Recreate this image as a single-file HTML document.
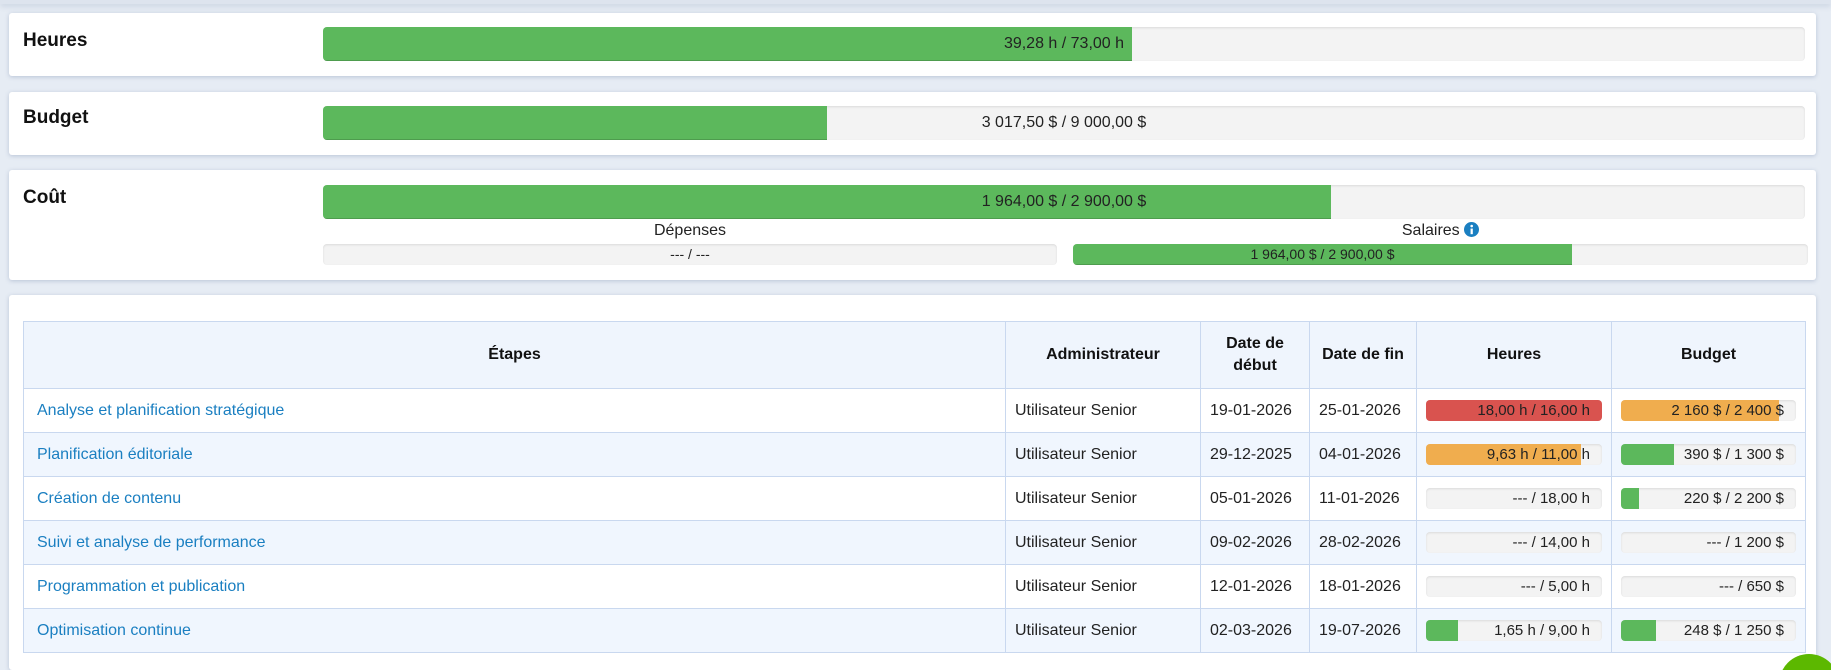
<!DOCTYPE html>
<html style="width:1831px;height:670px;overflow:hidden"><head><meta charset="utf-8"><style>
*{box-sizing:border-box;margin:0;padding:0}
body{width:1831px;height:670px;overflow:hidden;background:#e6ecf4;font-family:"Liberation Sans",sans-serif;color:#222;position:relative}
.topbar{position:absolute;left:0;top:0;width:1831px;height:4px;background:#dde4ee;box-shadow:0 2px 6px rgba(120,140,170,.3)}
.card{position:absolute;left:9px;width:1807px;background:#fff;border-radius:3px;box-shadow:0 1px 4px rgba(100,120,160,.35)}
.card h3{position:absolute;left:14px;font-size:19px;font-weight:bold;color:#111}
.bar{position:absolute;background:#f3f3f3;border-radius:4px;box-shadow:inset 0 1px 2px rgba(0,0,0,.1);overflow:hidden}
.fill{position:absolute;left:0;top:0;bottom:0;background:#5cb85c;box-shadow:inset 0 -1px 0 rgba(0,0,0,.15)}
.bar span{position:absolute;left:0;right:0;top:0;bottom:0;text-align:center;color:#222;z-index:2}
.lbl{position:absolute;text-align:center;font-size:16px;color:#222}
table{position:absolute;left:23px;top:321px;width:1783px;border-collapse:collapse;font-size:16px}
th,td{border:1px solid #c9d8ef;}
th{background:#eff5fd;font-weight:bold;height:67px;text-align:center;color:#111;line-height:22px;font-size:16px}
td{height:44px;padding:0 9px}
tr.alt td{background:#f0f6fe}
td.l{color:#1a7fc1;padding-left:13px}
.pb{position:relative;height:21px;background:#f3f3f3;border-radius:4px;overflow:hidden;box-shadow:inset 0 1px 2px rgba(0,0,0,.1)}
.pb .f{position:absolute;left:0;top:0;bottom:0}
.pb span{position:absolute;right:12px;top:0;line-height:21px;font-size:15px;color:#222}
.g{background:#5cb85c}.r{background:#d9534f}.o{background:#f0ad4e}
#clip{position:absolute;left:0;top:0;width:1831px;height:670px;overflow:hidden}
</style></head><body><div id="clip">
<div class="topbar"></div>
<div class="card" style="top:13px;height:63px"><h3 style="top:17px">Heures</h3>
<div class="bar" style="left:314px;top:14px;width:1482px;height:34px"><div class="fill" style="width:809px"></div><span style="line-height:34px;font-size:16px">39,28 h / 73,00 h</span></div></div>
<div class="card" style="top:92px;height:63px"><h3 style="top:15px">Budget</h3>
<div class="bar" style="left:314px;top:14px;width:1482px;height:34px"><div class="fill" style="width:504px"></div><span style="line-height:34px;font-size:16px">3 017,50 $ / 9 000,00 $</span></div></div>
<div class="card" style="top:170px;height:110px"><h3 style="top:17px">Coût</h3>
<div class="bar" style="left:314px;top:15px;width:1482px;height:34px"><div class="fill" style="width:1008px"></div><span style="line-height:34px;font-size:16px">1 964,00 $ / 2 900,00 $</span></div>
<div class="lbl" style="left:314px;top:52px;width:734px">Dépenses</div>
<div class="bar" style="left:314px;top:74px;width:734px;height:21px"><span style="line-height:21px;font-size:14px">--- / ---</span></div>
<div class="lbl" style="left:1064px;top:52px;width:735px">Salaires <svg width="15" height="15" viewBox="0 0 16 16" style="vertical-align:-2px"><circle cx="8" cy="8" r="8" fill="#1a7fc1"/><rect x="7" y="7" width="2.4" height="6" fill="#fff"/><circle cx="8.2" cy="4.3" r="1.4" fill="#fff"/></svg></div>
<div class="bar" style="left:1064px;top:74px;width:735px;height:21px"><div class="fill" style="width:499px"></div><span style="line-height:21px;font-size:14px;width:499px">1 964,00 $ / 2 900,00 $</span></div>
</div>
<div class="card" style="top:295px;height:375px"></div>
<table>
<tr><th style="width:982px">Étapes</th><th style="width:195px">Administrateur</th><th style="width:109px">Date de<br>début</th><th style="width:107px">Date de fin</th><th style="width:195px">Heures</th><th>Budget</th></tr>
<tr><td class="l">Analyse et planification stratégique</td><td>Utilisateur Senior</td><td>19-01-2026</td><td>25-01-2026</td><td><div class="pb"><div class="f r" style="width:100%"></div><span>18,00 h / 16,00 h</span></div></td><td><div class="pb"><div class="f o" style="width:90%"></div><span>2 160 $ / 2 400 $</span></div></td></tr>
<tr class="alt"><td class="l">Planification éditoriale</td><td>Utilisateur Senior</td><td>29-12-2025</td><td>04-01-2026</td><td><div class="pb"><div class="f o" style="width:88%"></div><span>9,63 h / 11,00 h</span></div></td><td><div class="pb"><div class="f g" style="width:30%"></div><span>390 $ / 1 300 $</span></div></td></tr>
<tr><td class="l">Création de contenu</td><td>Utilisateur Senior</td><td>05-01-2026</td><td>11-01-2026</td><td><div class="pb"><span>--- / 18,00 h</span></div></td><td><div class="pb"><div class="f g" style="width:10%"></div><span>220 $ / 2 200 $</span></div></td></tr>
<tr class="alt"><td class="l">Suivi et analyse de performance</td><td>Utilisateur Senior</td><td>09-02-2026</td><td>28-02-2026</td><td><div class="pb"><span>--- / 14,00 h</span></div></td><td><div class="pb"><span>--- / 1 200 $</span></div></td></tr>
<tr><td class="l">Programmation et publication</td><td>Utilisateur Senior</td><td>12-01-2026</td><td>18-01-2026</td><td><div class="pb"><span>--- / 5,00 h</span></div></td><td><div class="pb"><span>--- / 650 $</span></div></td></tr>
<tr class="alt"><td class="l">Optimisation continue</td><td>Utilisateur Senior</td><td>02-03-2026</td><td>19-07-2026</td><td><div class="pb"><div class="f g" style="width:18%"></div><span>1,65 h / 9,00 h</span></div></td><td><div class="pb"><div class="f g" style="width:20%"></div><span>248 $ / 1 250 $</span></div></td></tr>
</table>
<div style="position:absolute;left:1779px;top:654px;width:60px;height:60px;border-radius:50%;background:#5cb800"></div>
</div></body></html>
